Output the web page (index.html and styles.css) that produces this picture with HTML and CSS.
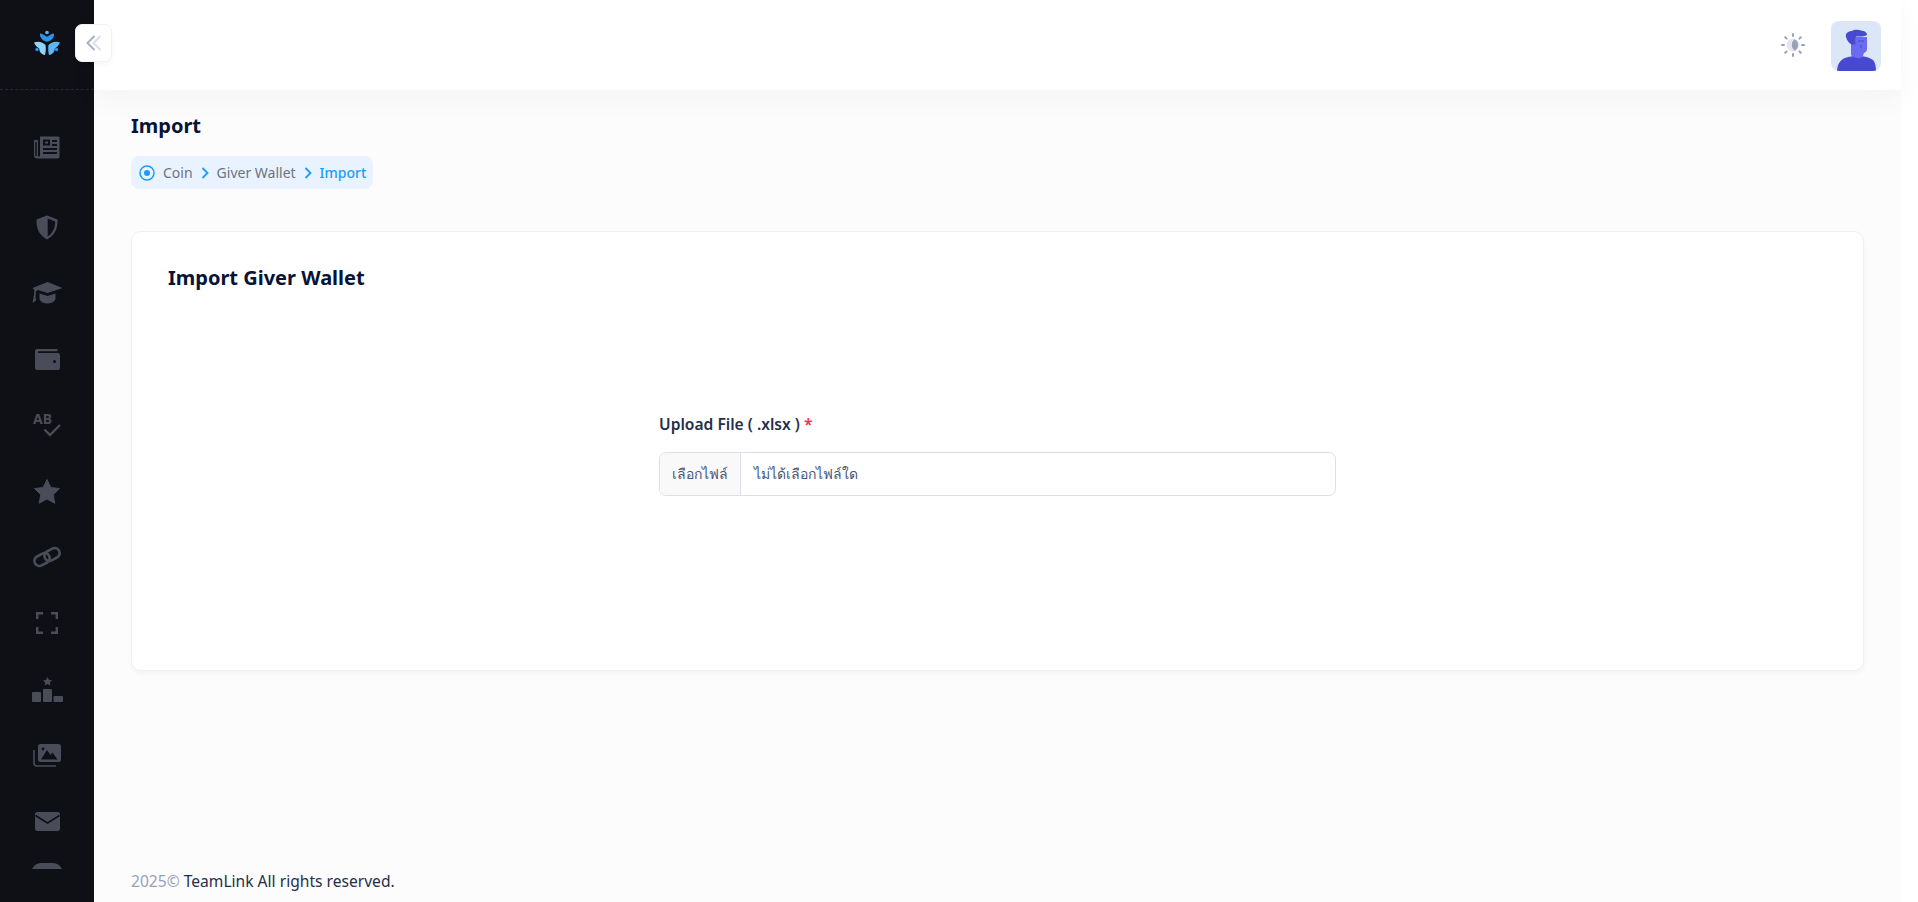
FILE: index.html
```html
<!DOCTYPE html>
<html lang="en">
<head>
  <meta charset="UTF-8">
  <meta name="viewport" content="width=device-width, initial-scale=1.0">
  <title>Import Giver Wallet</title>
  <link rel="stylesheet" href="styles.css">
</head>
<body>
  <aside class="sidebar">
    <div class="sidebar-logo">
      <svg width="28" height="26" viewBox="0 0 28 26">
        <circle cx="14" cy="2.5" r="1.8" fill="#5cb8f5"/>
        <path d="M7 3.5c2 .2 4 1.2 7 3.2 3-2 5-3 7-3.2.6 3-1.6 7-7 8.3-5.400-1.300-7.600-5.300-7-8.300z" fill="#2b94ea"/>
        <path d="M1 12.500c4-1.800 9-.6 11.500 2.500.6 3.500.2 7.200-.5 10-3.800-.6-5.500-3-5.800-6.500C4.500 17.500 2 15.500 1 12.500z" fill="#8ed4fb"/>
        <path d="M27 12.500c-4-1.800-9-.6-11.500 2.500-.6 3.500-.2 7.200.5 10 3.800-.6 5.500-3 5.800-6.500 1.700-1 4.200-3 5.200-6z" fill="#5cb8f5"/>
        <circle cx="4" cy="19.500" r="1.700" fill="#2b94ea"/>
        <circle cx="23.500" cy="19.500" r="1.700" fill="#2b94ea"/>
      </svg>
    </div>
    <nav class="sidebar-nav">
      <a class="nav-item nav-news">
        <svg width="26" height="24" viewBox="0 0 26 24"><path d="M6 1.500h18.500a1 1 0 0 1 1 1v19a2 2 0 0 1-2 2H3a3 3 0 0 1-3-3V6a1 1 0 0 1 1-1h3v15.500a1 1 0 0 0 2 0z" fill="#4a4d59" fill-rule="evenodd"/><path d="M9 4.500h7v6H9zM18 5h5v2h-5zM18 9h5v2h-5zM9 13h14v2H9zM9 17h14v2H9z" fill="#0e1015"/><path d="M11 6.500h3v2h-3z" fill="#4a4d59"/><path d="M2 7v14" stroke="#0e1015" stroke-width="1.500"/></svg>
      </a>
      <a class="nav-item nav-shield">
        <svg width="24" height="25" viewBox="0 0 24 25"><path d="M12 .5 22.500 4.500c.500 9-3 16-10.500 20-7.500-4-11-11-10.500-20z" fill="#4a4d59"/><path d="M12.700 3.500v18c4.800-3 7.400-8.500 7.500-15z" fill="#0e1015"/></svg>
      </a>
      <a class="nav-item nav-cap">
        <svg width="31" height="22" viewBox="0 0 31 22"><path d="M15.500 0 30.500 6 15.500 11 6 8 4 9.200C3.700 12 3.500 16 4 18.500L.5 21C1.500 16 2.200 12 2.500 8.300L.5 6z" fill="#4a4d59"/><path d="M7.500 11.500 15.500 14 23.500 11.500v6c-2 3-5 4-8 4s-6-1-8-4z" fill="#4a4d59"/></svg>
      </a>
      <a class="nav-item nav-wallet">
        <svg width="25" height="21" viewBox="0 0 25 21"><path d="M3 0h19a1.500 1.500 0 0 1 0 2.200H3.500a1 1 0 0 0 0 1.800H23a2 2 0 0 1 2 2v13a2 2 0 0 1-2 2H2.500A2.500 2.500 0 0 1 0 18.500v-16A2.500 2.500 0 0 1 3 0z" fill="#4a4d59"/><circle cx="19.500" cy="12.500" r="1.500" fill="#0e1015"/></svg>
      </a>
      <a class="nav-item nav-spell">
        <svg width="28" height="25" viewBox="0 0 28 25"><text x="0" y="11" class="spell-letters">AB</text><path d="M11.500 16.500 17 22 27 12" fill="none" stroke="#4a4d59" stroke-width="2.400"/></svg>
      </a>
      <a class="nav-item nav-star">
        <svg width="26" height="25" viewBox="0 0 26 25"><path d="M13 .5 16.800 8.500 25.500 9.600 19.200 15.700 20.800 24.300 13 20 5.200 24.300 6.800 15.700.5 9.600 9.200 8.500z" fill="#4a4d59" stroke="#4a4d59" stroke-linejoin="round"/></svg>
      </a>
      <a class="nav-item nav-link">
        <svg width="30" height="24" viewBox="0 0 30 24" fill="none" stroke="#4a4d59" stroke-width="2.600"><rect x="-8" y="-5" width="16" height="10" rx="5" transform="translate(10 14.500) rotate(-28)"/><rect x="-8" y="-5" width="16" height="10" rx="5" transform="translate(20 9.500) rotate(-28)"/></svg>
      </a>
      <a class="nav-item nav-focus">
        <svg width="22" height="22" viewBox="0 0 22 22" fill="none" stroke="#4a4d59" stroke-width="2.400"><path d="M1.200 7V1.200H7M15 1.200h5.800V7M20.800 15v5.800H15M7 20.800H1.200V15"/></svg>
      </a>
      <a class="nav-item nav-podium">
        <svg width="31" height="25" viewBox="0 0 31 25" fill="#4a4d59"><path d="M15.500 0 17 3 20 3.300 17.800 5.400 18.400 8.500 15.500 7 12.600 8.500 13.200 5.400 11 3.300 14 3z"/><rect x="0" y="15" width="9" height="10" rx="1"/><rect x="11" y="12" width="9" height="13" rx="1"/><rect x="21.500" y="19" width="9.500" height="6" rx="1"/></svg>
      </a>
      <a class="nav-item nav-photos">
        <svg width="28" height="23" viewBox="0 0 28 23"><path d="M1 6v13a3 3 0 0 0 3 3h19" fill="none" stroke="#4a4d59" stroke-width="1.600"/><rect x="5" y="0" width="23" height="18" rx="2.500" fill="#4a4d59"/><path d="M8 15.500 14 6l3.500 5 2-2.500 5 7z" fill="#0e1015"/><circle cx="10" cy="5" r="1.400" fill="#0e1015"/></svg>
      </a>
      <a class="nav-item nav-mail">
        <svg width="25" height="19" viewBox="0 0 25 19"><rect width="25" height="19" rx="2.500" fill="#4a4d59"/><path d="M.5 3.500 12.500 11 24.500 3.500" fill="none" stroke="#0e1015" stroke-width="1.600"/></svg>
      </a>
      <a class="nav-item nav-last">
        <svg width="30" height="6" viewBox="0 0 30 6"><path d="M0 6C2 2 5 0 9 0h12c4 0 7 2 9 6z" fill="#4a4d59"/></svg>
      </a>
    </nav>
  </aside>

  <button class="sidebar-toggle">
    <svg width="18" height="18" viewBox="0 0 18 18" fill="none" stroke-width="2"><path d="M9.500 2 2.500 9l7 7" stroke="#a9b0c9"/><path d="M15.500 2 8.500 9l7 7" stroke="#dcdfea"/></svg>
  </button>

  <div class="main">
    <header class="topbar">
      <svg class="theme-icon" width="24" height="24" viewBox="0 0 24 24">
        <g stroke="#99a1b7" stroke-width="2" stroke-linecap="round"><path d="M12 1v2M12 21v2M1 12h2M21 12h2M4.200 4.200l1.400 1.400M18.400 18.400l1.400 1.400M4.200 19.800l1.400-1.400M18.400 5.600l1.400-1.400"/></g>
        <circle cx="12" cy="12" r="6.500" fill="#e4e6ef"/>
        <path d="M13.500 6.200a6.500 6.500 0 0 1 0 11.600 7.500 7.500 0 0 1 0-11.600z" fill="#99a1b7"/>
      </svg>
      <div class="avatar">
        <svg width="50" height="50" viewBox="0 0 50 50">
          <path d="M6 50c.5-7 3-11 8-13 3-1 6-1.500 8-2h8c4 .5 9 1.500 12 4 2 2 3 6 3 11z" fill="#4749d2"/>
          <path d="M20 24h13v7l-1 4c-1 3-9 3-12-1z" fill="#6a6cf0"/>
          <path d="M20 16h16v12c0 3-3 5-7 4l-9-3z" fill="#6a6cf0"/>
          <path d="M15 16c-1-4 3-6 6-6 2-2 7-1.500 9-.5 3 .5 6 1.500 6 4.500-3 2-8 1.500-11 1.500-1 1-1 4-.5 8H21c-3-1-5-4-6-7.500z" fill="#4749d2"/>
          <path d="M27 20h6M30 24v3" stroke="#4749d2" stroke-width="1"/>
        </svg>
      </div>
    </header>

    <main class="content">
      <h1 class="page-title">Import</h1>
      <div class="breadcrumb">
        <svg width="16" height="16" viewBox="0 0 16 16"><circle cx="8" cy="8" r="7" fill="none" stroke="#1b9cfc" stroke-width="1.500"/><circle cx="8" cy="8" r="3" fill="#1b9cfc"/></svg>
        <span class="crumb">Coin</span>
        <svg class="chevron" width="8" height="12" viewBox="0 0 8 12"><path d="M1.500 1 6.500 6l-5 5" fill="none" stroke="#1b9cfc" stroke-width="1.800"/></svg>
        <span class="crumb">Giver Wallet</span>
        <svg class="chevron" width="8" height="12" viewBox="0 0 8 12"><path d="M1.500 1 6.500 6l-5 5" fill="none" stroke="#1b9cfc" stroke-width="1.800"/></svg>
        <span class="crumb crumb-active">Import</span>
      </div>

      <section class="card">
        <h2 class="card-title">Import Giver Wallet</h2>
        <form class="upload-form">
          <label class="upload-label">Upload File ( .xlsx ) <span class="required">*</span></label>
          <div class="file-field">
            <span class="file-btn">เลือกไฟล์</span>
            <span class="file-name">ไม่ได้เลือกไฟล์ใด</span>
          </div>
        </form>
      </section>
    </main>

    <footer class="footer"><span class="footer-year">2025©</span> TeamLink All rights reserved.</footer>
  </div>
</body>
</html>
```

FILE: styles.css
```css
* {
  box-sizing: border-box;
}

html, body {
  height: 100%;
}

body {
  margin: 0;
  font-family: "Noto Sans", sans-serif;
  background: #fff;
  color: #071437;
  display: flex;
  overflow: hidden;
}

.sidebar {
  width: 94px;
  flex-shrink: 0;
  height: 902px;
  background: #0e1015;
  overflow: hidden;
}

.sidebar-logo {
  height: 90px;
  display: flex;
  align-items: center;
  justify-content: center;
  padding-right: 1px;
  padding-bottom: 4px;
  border-bottom: 1px dashed #26282f;
}

.sidebar-nav {
  display: flex;
  flex-direction: column;
  align-items: center;
  padding-left: 0;
}

.nav-item {
  height: 66px;
  flex-shrink: 0;
  display: flex;
  align-items: center;
  justify-content: center;
}

.nav-news {
  margin-top: 24px;
  margin-bottom: 14px;
}

.spell-letters {
  font-family: "Noto Sans", sans-serif;
  font-size: 14px;
  font-weight: 700;
  fill: #4a4d59;
}

.nav-last {
  align-items: flex-start;
  margin-top: 9px;
}

.sidebar-toggle {
  position: absolute;
  left: 75px;
  top: 24px;
  width: 37px;
  height: 38px;
  padding: 0;
  background: #fff;
  border: 1px solid #f1f1f4;
  border-radius: 7px;
  box-shadow: 0 3px 4px rgba(0, 0, 0, 0.03);
  display: flex;
  align-items: center;
  justify-content: center;
  z-index: 3;
}

.main {
  flex: 1;
  height: 902px;
  padding-right: 17px;
  display: flex;
  flex-direction: column;
  background: linear-gradient(#fcfcfc, #fcfcfc) no-repeat 0 0 / calc(100% - 17px) 100%;
}

.topbar {
  height: 90px;
  flex-shrink: 0;
  background: #fff;
  box-shadow: 0 10px 30px rgba(0, 0, 0, 0.035);
  display: flex;
  align-items: center;
  justify-content: flex-end;
  padding-right: 20px;
  gap: 26px;
  position: relative;
  z-index: 1;
}

.theme-icon {
  margin-top: -1px;
}

.avatar {
  width: 50px;
  height: 50px;
  border-radius: 8px;
  background: #dbe6f7;
  overflow: hidden;
  margin-top: 1px;
}

.avatar svg {
  display: block;
}

.content {
  flex: 1;
  padding: 22px 37px 0;
}

.page-title {
  margin: 0;
  font-size: 20px;
  line-height: 27px;
  font-weight: 700;
}

.breadcrumb {
  display: inline-flex;
  align-items: center;
  gap: 8px;
  height: 33px;
  margin-top: 17px;
  padding: 0 7px 0 8px;
  background: #e9f3ff;
  border-radius: 8px;
  font-size: 14px;
}

.crumb {
  color: #6d7380;
}

.crumb-active {
  color: #1b9cfc;
  font-weight: 500;
}

.card {
  margin-top: 42px;
  height: 440px;
  background: #fff;
  border: 1px solid #f1f1f4;
  border-radius: 10px;
  box-shadow: 0 3px 4px rgba(0, 0, 0, 0.03);
  padding: 32px 36px;
}

.card-title {
  margin: 0;
  font-size: 20px;
  line-height: 27px;
  font-weight: 700;
}

.upload-form {
  width: 677px;
  margin: 123px auto 0;
}

.upload-label {
  display: block;
  font-size: 15.6px;
  line-height: 21px;
  font-weight: 600;
  color: #252f4a;
}

.required {
  color: #f8285a;
}

.file-field {
  margin-top: 17px;
  height: 44px;
  display: flex;
  border: 1px solid #dbdfe9;
  border-radius: 7px;
  overflow: hidden;
  font-size: 14px;
  color: #4b5675;
}

.file-btn {
  width: 81px;
  background: #f9f9f9;
  border-right: 1px solid #dbdfe9;
  display: flex;
  align-items: center;
  justify-content: center;
}

.file-name {
  padding-left: 13px;
  display: flex;
  align-items: center;
}

.footer {
  padding: 0 37px 10px;
  font-size: 15.6px;
  line-height: 21px;
  color: #252f4a;
}

.footer-year {
  color: #99a1b7;
}
```
